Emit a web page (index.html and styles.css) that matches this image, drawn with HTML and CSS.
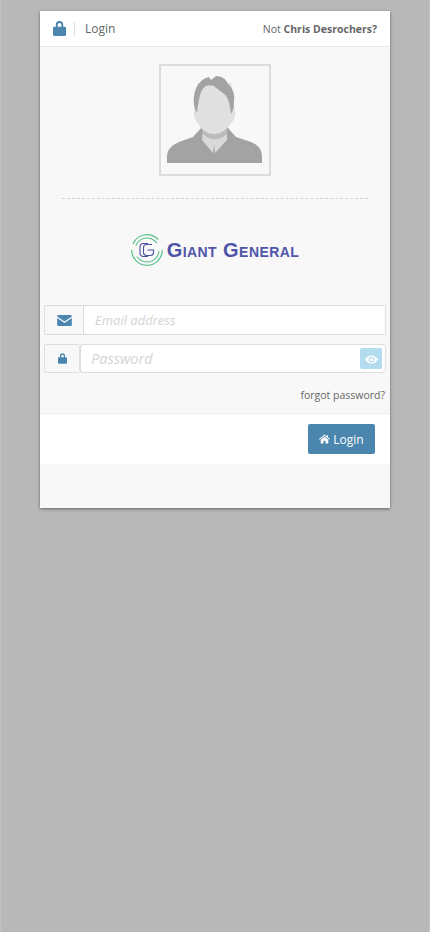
FILE: index.html
```html
<!DOCTYPE html>
<html lang="en">
<head>
  <meta charset="UTF-8" />
  <meta name="viewport" content="width=device-width, initial-scale=1.0" />
  <title>Login</title>
  <link rel="stylesheet" href="styles.css">
</head>
<body>
  <div class="box">
    <div class="box-header">
      <svg class="lock-big" viewBox="0 0 14 16"><path d="M3 8V4a4 4 0 0 1 8 0v4H9V4a2 2 0 0 0-4 0v4z"/><rect y="6" width="14" height="10" rx="1.500"/></svg>
      <span class="header-sep"></span>
      <span class="header-title">Login</span>
      <span class="not-user">Not <strong>Chris Desrochers?</strong></span>
    </div>

    <div class="box-body">
      <div class="avatar">
        <svg viewBox="0 0 108 108" width="108" height="108">
          <path fill="#a3a3a3" d="M6 97V91C6 83 11 79 18 76L32 71 41 61H66L75 71 90 76C97 79 101 83 101 91V97z"/>
          <path fill="#d9d9d9" d="M42 62 41 74 52 87 53 79 54 87 66 74 66 62z"/>
          <path fill="#bcbcbc" d="M42 62H66V68C58 75 49 75 42 68z"/>
          <path fill="#e0e0e0" d="M33 44C32 49 34 55 37 57 39 63 46 68 53 68 60 68 67 63 70 57 73 55 75 49 74 44L70 17H37z"/>
          <path fill="#a3a3a3" d="M36 47C33 42 32 36 33 30 34 20 41 12 48 11L50 14 55 10C61 10 65 13 67 18 72 22 74 29 73 36 73 41 72 45 70 48 69 40 68 34 65 30 62 26 58 25 53 20 48 18 43 20 41 24 38 30 37 38 36 47z"/>
        </svg>
      </div>
      <div class="dashed"></div>

      <div class="logo">
        <svg class="logo-mark" viewBox="0 0 32 32" width="32" height="32" fill="none">
          <circle cx="16" cy="16" r="15.300" stroke="#58c088" stroke-width="1.200" stroke-dasharray="48 6 30 12"/>
          <circle cx="16" cy="16" r="12" stroke="#58c088" stroke-width="1" stroke-dasharray="26 8 30 12" transform="rotate(200 16 16)"/>
          <path stroke="#4a52a5" stroke-width="1.100" d="M17 9.500H12.500a3.500 3.500 0 0 0-3.500 3.500v6a3.500 3.500 0 0 0 3.500 3.500H17"/>
          <path stroke="#4a52a5" stroke-width="1.100" d="M21 10.500H15.500a3 3 0 0 0-3 3v5a3 3 0 0 0 3 3h4a3 3 0 0 0 3-3v-2.500h-6"/>
        </svg>
        <span class="logo-text">Giant General</span>
      </div>

      <div class="input-row">
        <span class="addon addon-wide">
          <svg viewBox="0 0 16 12" width="15" height="11"><path d="M0 1.500A1.500 1.500 0 0 1 1.500 0h13A1.500 1.500 0 0 1 16 1.500L8 7z"/><path d="M0 3.300V10.500A1.500 1.500 0 0 0 1.500 12h13a1.500 1.500 0 0 0 1.500-1.500V3.300L8 8.800z"/></svg>
        </span>
        <div class="field">Email address</div>
      </div>

      <div class="input-row pass-row">
        <span class="addon">
          <svg viewBox="0 0 14 16" width="9" height="11"><path d="M3 8V4a4 4 0 0 1 8 0v4H9V4a2 2 0 0 0-4 0v4z"/><rect y="6" width="14" height="10" rx="1.500"/></svg>
        </span>
        <div class="field field-pass">
          Password
          <span class="eye">
            <svg viewBox="0 0 16 10" width="13" height="9"><path fill-rule="evenodd" d="M8 0c3.500 0 6.300 2.200 8 5-1.700 2.800-4.500 5-8 5S1.700 7.800 0 5c1.700-2.800 4.500-5 8-5zm0 1.500a3.500 3.500 0 1 0 0 7 3.500 3.500 0 0 0 0-7zM8 3a2 2 0 1 1 0 4 2 2 0 0 1 0-4z"/></svg>
          </span>
        </div>
      </div>

      <div class="forgot">forgot password?</div>
    </div>

    <div class="box-footer">
      <a class="btn" href="#">
        <svg viewBox="0 0 16 13" width="11" height="10"><path d="M8 0l3 2.400V1h2v3l3 2.500-.8 1L8 1.800.8 7.500 0 6.500z"/><path d="M8 3.200l5.500 4.400V13H9.500V9h-3v4H2.500V7.600z"/></svg>
        Login
      </a>
    </div>
  </div>
</body>
</html>
```

FILE: styles.css
```css
html, body {
  margin: 0;
  padding: 0;
  height: 100%;
}

body {
  background: #b8b8b8;
  font-family: 'Open Sans', sans-serif;
  color: #555;
  padding: 11px 39px 0;
  border: solid #c2c2c2;
  border-width: 0 1px;
  box-sizing: border-box;
}

.box {
  width: 350px;
  height: 497px;
  background: #f8f8f8;
  box-shadow: 0 1px 3px rgba(0,0,0,0.45);
}

.box-header {
  display: flex;
  align-items: center;
  height: 35px;
  background: #fff;
  border-bottom: 1px solid #e9e9e9;
  padding: 0 13px;
}

.lock-big {
  width: 13px;
  height: 15px;
  fill: #4a86ae;
}

.header-sep {
  width: 1px;
  height: 14px;
  background: #ddd;
  margin: 0 10px 0 8px;
}

.header-title {
  font-size: 12px;
  color: #666;
}

.not-user {
  margin-left: auto;
  font-size: 10.500px;
  color: #666;
}

.box-body {
  height: 366px;
  padding: 17px 4px 0;
  box-sizing: border-box;
}

.avatar {
  width: 108px;
  height: 108px;
  margin: 0 auto;
  border: 2px solid #ddd;
}

.avatar svg {
  display: block;
}

.dashed {
  margin: 22px 18px 0;
  border-top: 1px dashed #d4d4d4;
}

.logo {
  display: flex;
  align-items: center;
  justify-content: center;
  gap: 4px;
  height: 34px;
  margin-top: 34px;
}

.logo-text {
  font-family: 'Liberation Sans', sans-serif;
  font-variant: small-caps;
  font-weight: bold;
  font-size: 20px;
  letter-spacing: 0.45px;
  color: #4f55a8;
}

.input-row {
  display: flex;
  height: 30px;
  margin-top: 38px;
}

.pass-row {
  height: 29px;
  margin-top: 9px;
}

.addon {
  display: flex;
  align-items: center;
  justify-content: center;
  flex: none;
  width: 35px;
  box-sizing: border-box;
  border: 1px solid #dedede;
  border-right: 0;
  border-radius: 2px 0 0 2px;
}

.addon svg {
  fill: #4a86ae;
}

.addon-wide {
  width: 39px;
}

.field {
  flex: 1;
  display: flex;
  align-items: center;
  background: #fff;
  border: 1px solid #dedede;
  padding-left: 11px;
  font-size: 13px;
  font-style: italic;
  color: #d4d4d4;
}

.field-pass {
  position: relative;
  border-width: 1px 1px 1px 2px;
  border-radius: 4px;
  padding-left: 10px;
  font-size: 14.500px;
}

.eye {
  position: absolute;
  top: 3px;
  right: 3px;
  display: flex;
  align-items: center;
  justify-content: center;
  width: 22px;
  height: 21px;
  background: #b4dcef;
  border-radius: 2px;
}

.eye svg {
  fill: #fff;
  margin-top: 2px;
}

.forgot {
  margin-top: 15px;
  margin-right: 1px;
  text-align: right;
  font-size: 10.500px;
  color: #666;
}

.box-footer {
  display: flex;
  justify-content: flex-end;
  align-items: flex-start;
  height: 51px;
  box-sizing: border-box;
  background: #fff;
  border-top: 1px solid #ececec;
  padding: 10px 15px 0;
}

.btn {
  display: flex;
  align-items: center;
  justify-content: center;
  gap: 3px;
  width: 67px;
  height: 30px;
  background: #4a86ae;
  border-radius: 2px;
  color: #fff;
  font-size: 12px;
  text-decoration: none;
}

.btn svg {
  fill: #fff;
}
```
